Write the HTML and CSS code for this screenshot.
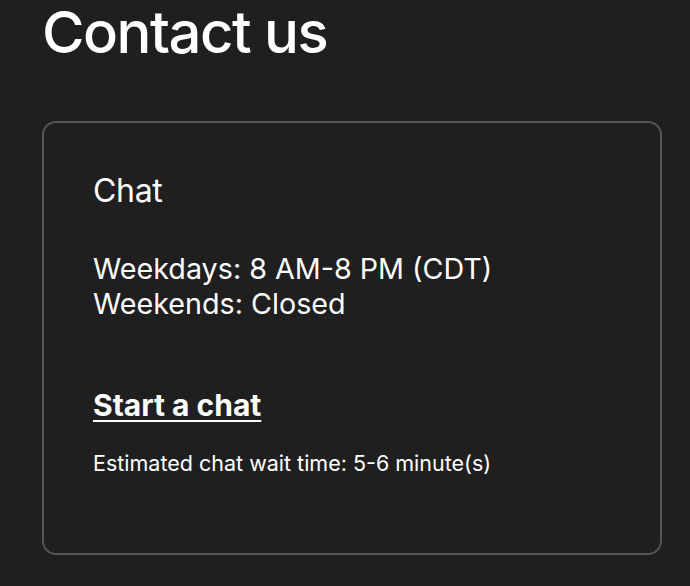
FILE: index.html
```html
<!DOCTYPE html>
<html>
<head>
<meta charset="utf-8">
<link rel="stylesheet" href="styles.css">
</head>
<body>
<main class="page">
  <h1 class="title">Contact us</h1>
  <section class="card">
    <h2 class="card-title">Chat</h2>
    <p class="hours">Weekdays: 8 AM-8 PM (CDT)<br>Weekends: Closed</p>
    <a class="chat-link" href="#">Start a chat</a>
    <p class="wait">Estimated chat wait time: 5-6 minute(s)</p>
  </section>
</main>
</body>
</html>
```
FILE: styles.css
```css
html, body {
  margin: 0;
  padding: 0;
  background: #1f1f1f;
  color: #ffffff;
  font-family: Inter, "Noto Sans", sans-serif;
}
.page {
  padding: 0 28px 0 42px;
}
.title {
  margin: 0;
  font-size: 58px;
  font-weight: 500;
  line-height: 64px;
  letter-spacing: -1.5px;
}
.card {
  margin-top: 57px;
  width: 620px;
  height: 434px;
  box-sizing: border-box;
  border: 2px solid #555555;
  border-radius: 14px;
  padding: 48px 49px;
}
.card-title {
  margin: 0;
  font-size: 32px;
  font-weight: 400;
  line-height: 40px;
  letter-spacing: -0.3px;
}
.hours {
  margin: 40px 0 0;
  font-size: 28.7px;
  line-height: 35px;
}
.chat-link {
  display: inline-block;
  margin-top: 66px;
  color: #ffffff;
  font-size: 30px;
  font-weight: 700;
  line-height: 36px;
  text-decoration: underline;
  text-underline-offset: 4px;
  text-decoration-thickness: 2px;
}
.wait {
  margin: 26px 0 0;
  font-size: 21.5px;
  line-height: 28px;
}
```
